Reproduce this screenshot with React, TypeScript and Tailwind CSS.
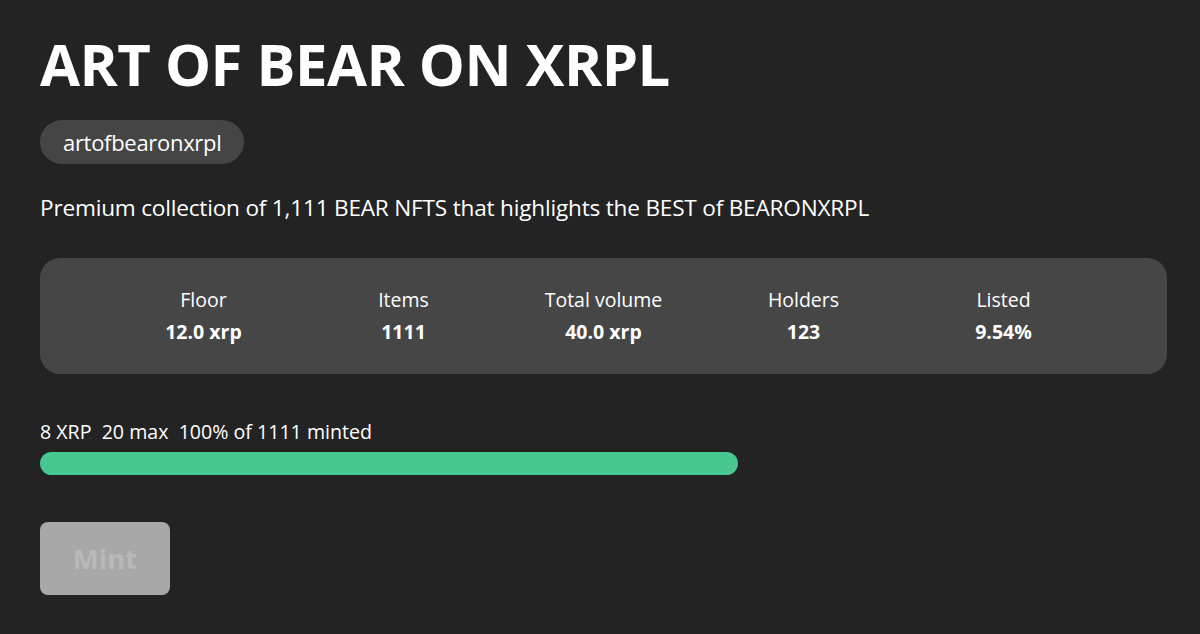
import React from 'react';

const stats = [
  { label: 'Floor', value: '12.0 xrp' },
  { label: 'Items', value: '1111' },
  { label: 'Total volume', value: '40.0 xrp' },
  { label: 'Holders', value: '123' },
  { label: 'Listed', value: '9.54%' },
];

export default function App() {
  return (
    <div
      className="min-h-[634px] w-full bg-[#232323] text-white px-10 pt-[30px]"
      style={{ fontFamily: '"Open Sans", "Noto Sans", sans-serif' }}
    >
      <h1 className="text-[58px] font-bold leading-[68px] tracking-[-0.5px]">ART OF BEAR ON XRPL</h1>

      <div className="mt-[22px] inline-flex h-[44px] items-center rounded-full bg-[#454545] px-[23px] text-[22px] tracking-[-0.3px]">
        artofbearonxrpl
      </div>

      <p className="mt-[30px] text-[22.6px] leading-[28px] tracking-[-0.2px]">
        Premium collection of 1,111 BEAR NFTS that highlights the BEST of BEARONXRPL
      </p>

      <div className="mt-[36px] flex h-[116px] w-[1127px] items-center justify-center rounded-[20px] bg-[#464646]">
        {stats.map((s) => (
          <div key={s.label} className="flex w-[200px] flex-col items-center">
            <span className="text-[19.5px] leading-[32px]">{s.label}</span>
            <span className="text-[19.5px] font-bold leading-[32px]">{s.value}</span>
          </div>
        ))}
      </div>

      <div className="mt-[46px] text-[19.6px] leading-[24px] whitespace-pre">8 XRP  20 max  100% of 1111 minted</div>
      <div className="mt-[8px] h-[23px] w-[698px] rounded-full bg-[#48c78e]" />

      <button
        disabled
        className="mt-[47px] flex h-[73px] w-[130px] items-center justify-center rounded-[8px] bg-[#a8a8a8] text-[27.5px] font-bold text-[#b9b9b9]"
      >
        Mint
      </button>
    </div>
  );
}
